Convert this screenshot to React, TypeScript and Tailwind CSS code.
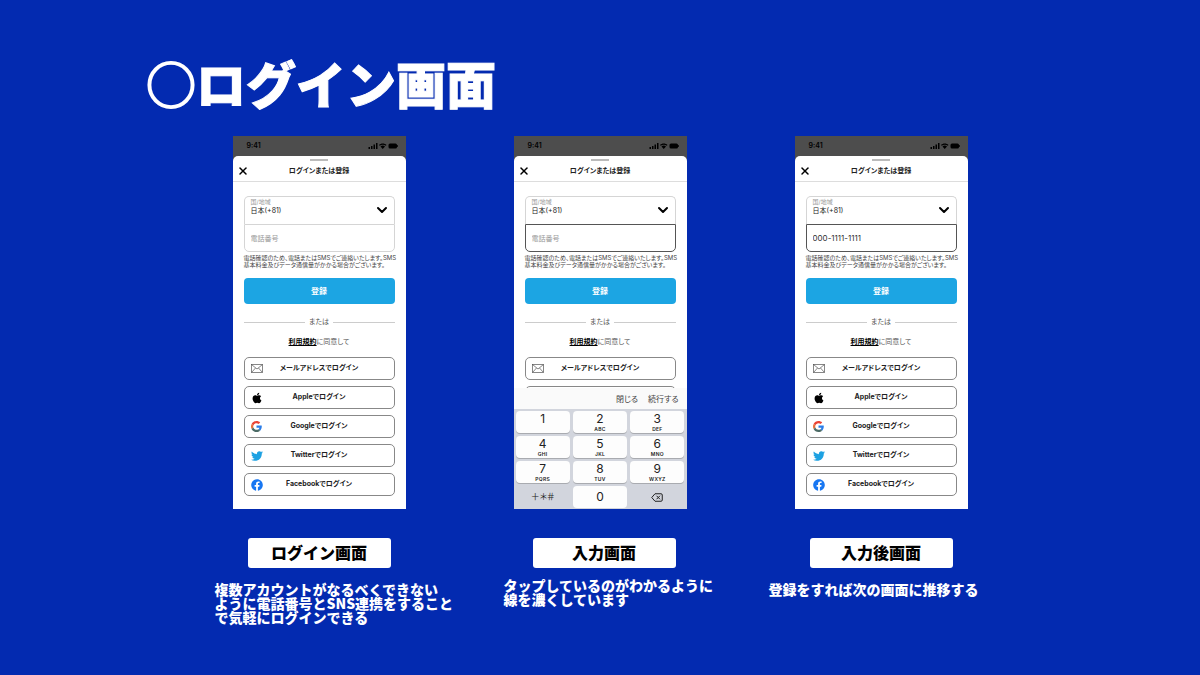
import type { ReactNode } from "react";
import { ChevronDown, X } from "lucide-react";
import { FaApple, FaFacebook, FaTwitter } from "react-icons/fa";

type Screen = {
  id: string;
  title: string;
  lines: string[];
  phone?: string;
  active?: boolean;
  keypad?: boolean;
  captionClass?: string;
  noteClass: string;
};

const screens: Screen[] = [
  {
    id: "login",
    title: "ログイン画面",
    lines: [
      "複数アカウントがなるべくできない",
      "ように電話番号とSNS連携をすること",
      "で気軽にログインできる",
    ],
    noteClass: "mt-3.5 pl-9",
  },
  {
    id: "input",
    title: "入力画面",
    lines: ["タップしているのがわかるように", "線を濃くしています"],
    active: true,
    keypad: true,
    captionClass: "pl-2",
    noteClass: "mt-2.5 pl-9",
  },
  {
    id: "done",
    title: "入力後画面",
    lines: ["登録をすれば次の画面に推移する"],
    phone: "000-1111-1111",
    active: true,
    noteClass: "mt-3.5 pl-7",
  },
];

const keys = [
  ["1", ""],
  ["2", "ABC"],
  ["3", "DEF"],
  ["4", "GHI"],
  ["5", "JKL"],
  ["6", "MNO"],
  ["7", "PQRS"],
  ["8", "TUV"],
  ["9", "WXYZ"],
];

function MailIcon() {
  return (
    <svg viewBox="0 0 24 18" className="h-[9px] w-3" fill="none" stroke="#555" strokeWidth="1.4">
      <rect x="1" y="1" width="22" height="16" />
      <path d="M1 1l11 9L23 1M1 17l8-9M23 17l-8-9" />
    </svg>
  );
}

function GoogleIcon() {
  return (
    <svg viewBox="0 0 48 48" className="size-[11px]">
      <path fill="#ea4335" d="M24 9.5c3.5 0 6.700 1.200 9.200 3.600l6.900-6.900C35.900 2.400 30.500 0 24 0 14.600 0 6.500 5.400 2.600 13.200l8 6.200C12.400 13.700 17.700 9.500 24 9.500z" />
      <path fill="#2a7de8" d="M47 24.500c0-1.600-.2-3.100-.4-4.500H24v9h12.900c-.6 3-2.200 5.500-4.700 7.200l7.700 6C44.400 38 47 31.800 47 24.500z" />
      <path fill="#e8703a" d="M10.500 28.600c-.5-1.500-.8-3-.8-4.600s.3-3.100.8-4.600l-8-6.200C.9 16.500 0 20.100 0 24s.9 7.500 2.600 10.800l7.900-6.200z" />
      <path fill="#4c6b66" d="M24 48c6.500 0 11.900-2.100 15.900-5.800l-7.700-6c-2.200 1.400-4.900 2.300-8.200 2.300-6.300 0-11.600-4.200-13.500-9.900l-8 6.200C6.500 42.600 14.600 48 24 48z" />
    </svg>
  );
}

const providers: { name: string; icon: ReactNode }[] = [
  { name: "メールアドレス", icon: <MailIcon /> },
  { name: "Apple", icon: <FaApple className="size-3 text-black" /> },
  { name: "Google", icon: <GoogleIcon /> },
  { name: "Twitter", icon: <FaTwitter className="size-3 text-[#1da1e2]" /> },
  { name: "Facebook", icon: <FaFacebook className="size-3 text-[#1877f2]" /> },
];

function StatusBar() {
  return (
    <div className="flex h-5 shrink-0 items-center justify-between bg-[#4d4d4d] pr-2 pl-3.5 text-black">
      <span className="text-[7px] font-semibold">9:41</span>
      <svg viewBox="0 0 60 12" className="h-1.5 w-[30px]" fill="currentColor">
        <path d="M1 8h3v4H1zM6 6h3v6H6zM11 3h3v9h-3zM16 0h3v12h-3z" />
        <path d="M29.500 1c3 0 5.500 1 7.500 3l-1.500 1.700c-1.700-1.500-3.700-2.300-6-2.300s-4.300.8-6 2.300L22 4c2-2 4.500-3 7.500-3zM29.500 5c1.800 0 3.300.7 4.500 1.800l-4.500 5-4.500-5C26.200 5.700 27.700 5 29.500 5z" />
        <rect x="41" y="1" width="17" height="10" rx="3" />
        <rect x="58.500" y="4" width="1.500" height="4" />
      </svg>
    </div>
  );
}

function Keypad() {
  return (
    <div className="shrink-0">
      <div className="flex h-[21px] items-center justify-end gap-2.5 bg-[#fafafa] pr-2 text-[8px] text-[#444]">
        <button type="button">閉じる</button>
        <button type="button">続行する</button>
      </div>
      <div className="grid grid-cols-3 gap-[3px] bg-[#d2d5dd] px-0.5 pt-0.5 pb-px text-[#222]">
        {keys.map(([digit, letters]) => (
          <button
            key={digit}
            type="button"
            className="flex h-[22px] flex-col items-center justify-start rounded-sm bg-[#fdfdfd] shadow-[0_1px_0_#a9abb0]"
          >
            <span className="text-[12px] leading-[15px]">{digit}</span>
            {letters && (
              <span className="text-[5px] leading-[7px] font-semibold tracking-wider">{letters}</span>
            )}
          </button>
        ))}
        <button type="button" className="h-[22px] text-[9px]">
          ＋＊＃
        </button>
        <button type="button" className="h-[22px] rounded-sm bg-[#fdfdfd] text-[12px]">
          0
        </button>
        <button type="button" aria-label="削除" className="flex h-[22px] items-center justify-center">
          <svg viewBox="0 0 24 18" className="h-[9px] w-3" fill="none" stroke="currentColor" strokeWidth="2">
            <path d="M8 1.500h12a2.500 2.500 0 0 1 2.500 2.500v10a2.500 2.500 0 0 1-2.500 2.500H8L1.500 9z" />
            <path d="M11 5.500l7 7M18 5.500l-7 7" />
          </svg>
        </button>
      </div>
    </div>
  );
}

function Phone({ screen }: { screen: Screen }) {
  const { id, active, phone, keypad } = screen;
  // the keypad covers everything after the second button
  const visibleProviders = keypad ? providers.slice(0, 1) : providers;

  return (
    <div className="flex h-[373px] w-[173px] flex-col overflow-hidden bg-[#4d4d4d] font-['Inter','Noto_Sans_CJK_JP',sans-serif] font-normal text-[#222] [font-feature-settings:'palt']">
      <StatusBar />
      <div className="min-h-0 flex-1 overflow-hidden rounded-t-[5px] bg-white">
        <div className="mx-auto h-[5px] w-[18px] border-b-2 border-[#bbb]" />
        <div className="grid h-[21px] grid-cols-[20px_1fr_20px] items-center border-b border-[#ddd]">
          <button type="button" aria-label="閉じる" className="flex justify-center">
            <X className="size-3 text-black" strokeWidth={3} />
          </button>
          <h2 className="text-center text-[7px] font-bold">ログインまたは登録</h2>
        </div>

        <form className="px-[11px] pt-3.5">
          <div className="relative h-7 rounded-t-[5px] border border-b-0 border-[#d5d5d5] px-1.5 pt-px">
            <label htmlFor={`${id}-country`} className="block text-[6px] leading-[7px] text-[#999]">
              国/地域
            </label>
            <select
              id={`${id}-country`}
              className="block h-[11px] w-full appearance-none text-[7px] leading-[11px] text-[#222]"
            >
              <option>日本(+81)</option>
            </select>
            <ChevronDown
              className="pointer-events-none absolute top-[5px] right-1 size-4 text-black"
              strokeWidth={3}
            />
          </div>
          <input
            type="tel"
            aria-label="電話番号"
            placeholder="電話番号"
            defaultValue={phone}
            className={`block h-7 w-full rounded-b-[5px] border px-1.5 text-[8px] text-[#333] placeholder:text-[7px] placeholder:text-[#999] ${
              active ? "border-[#555]" : "border-[#d5d5d5]"
            }`}
          />
          <p className="mt-0.5 text-[6px] leading-[7px] whitespace-nowrap text-[#444]">
            電話確認のため、電話またはSMSでご連絡いたします。SMS
            <br />
            基本料金及びデータ通信量がかかる場合がございます。
          </p>
          <button
            type="submit"
            className="mt-2.5 block h-[26px] w-full rounded-[4px] bg-[#1ca5e3] text-[8px] font-bold text-white"
          >
            登録
          </button>

          <div className="mt-3 flex items-center gap-1 text-[7px] leading-3 text-[#555]">
            <span className="h-px flex-1 bg-[#ccc]" />
            または
            <span className="h-px flex-1 bg-[#ccc]" />
          </div>
          <p className="mt-2 text-center text-[7px] leading-3 text-[#555]">
            <a href="#terms" className="font-bold text-black underline">
              利用規約
            </a>
            に同意して
          </p>

          <div className="mt-[9px] flex flex-col gap-1.5">
            {visibleProviders.map((p) => (
              <button
                key={p.name}
                type="button"
                className="grid h-[23px] grid-cols-[24px_1fr_24px] items-center rounded-[5px] border border-[#888] text-[7px] font-bold"
              >
                <span className="flex justify-center">{p.icon}</span>
                <span>{p.name}でログイン</span>
              </button>
            ))}
            {keypad && <div className="h-[23px] rounded-[5px] border border-[#888]" />}
          </div>
        </form>
      </div>
      {keypad && <Keypad />}
    </div>
  );
}

export default function App() {
  return (
    <main className="min-h-screen bg-[#032ab0] font-['Noto_Sans_CJK_JP',sans-serif] font-black text-white">
      <h1 className="px-[146px] pt-11 text-[50px] leading-[76px] [-webkit-text-stroke:1px_white]">
        <span className="font-normal [-webkit-text-stroke:2px_white]">○</span>ログイン画面
      </h1>

      <div className="mx-auto mt-4 grid max-w-[843px] grid-cols-3">
        {screens.map((s) => (
          <figure key={s.id} className="flex flex-col items-center">
            <Phone screen={s} />
            <figcaption className={`mt-[29px] w-full ${s.captionClass ?? ""}`}>
              <h3 className="mx-auto flex h-[30px] w-[143px] items-center justify-center rounded-[3px] bg-white pb-0.5 text-[16px] text-black">
                {s.title}
              </h3>
              <p className={`text-[14px] leading-[14px] whitespace-nowrap ${s.noteClass}`}>
                {s.lines.map((line) => (
                  <span key={line} className="block">
                    {line}
                  </span>
                ))}
              </p>
            </figcaption>
          </figure>
        ))}
      </div>
    </main>
  );
}
